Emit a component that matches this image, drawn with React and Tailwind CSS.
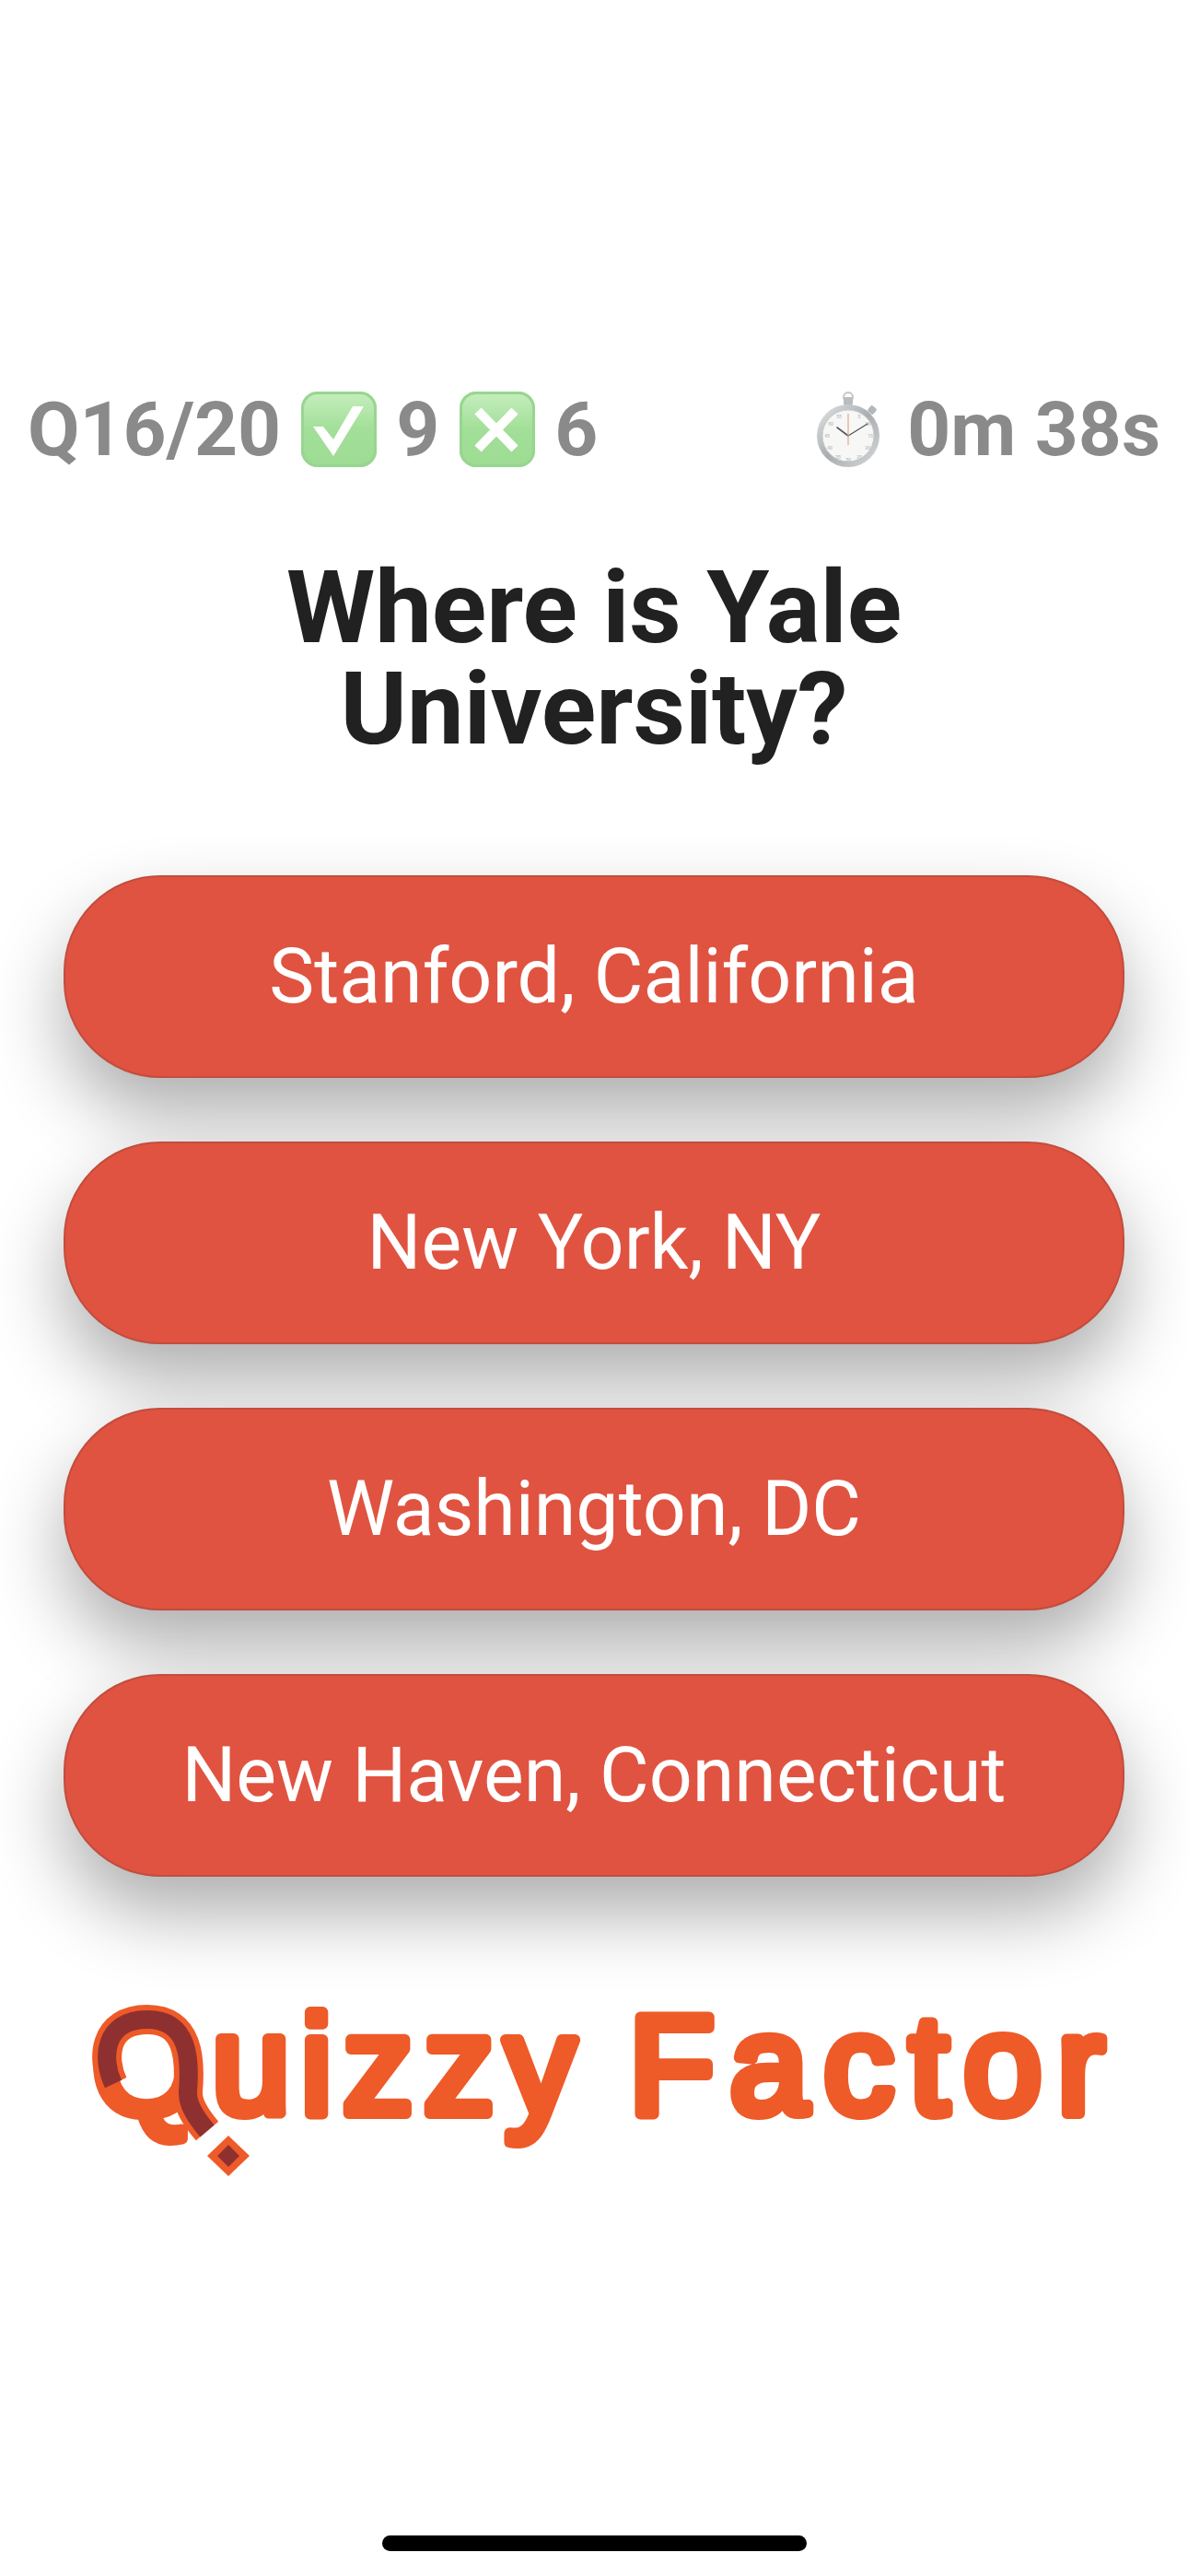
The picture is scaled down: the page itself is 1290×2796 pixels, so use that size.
const answers = [
  "Stanford, California",
  "New York, NY",
  "Washington, DC",
  "New Haven, Connecticut",
];

const EmojiBox = ({ children }) => (
  <span className="block h-[82px] w-[82px] rounded-[18px] bg-gradient-to-b from-[#c6eebe] via-[#a2df98] to-[#9edb93] shadow-[inset_0_0_0_3px_#97d690]">
    <svg viewBox="0 0 82 82" className="h-[82px] w-[82px]">{children}</svg>
  </span>
);

const Stopwatch = () => (
  <svg viewBox="0 0 68 82" className="h-[82px] w-[68px]">
    <defs>
      <linearGradient id="ring" x1="0" y1="0" x2="1" y2="1">
        <stop offset="0" stopColor="#e4e6e8" />
        <stop offset="0.5" stopColor="#a9adb1" />
        <stop offset="1" stopColor="#d9dbdd" />
      </linearGradient>
    </defs>
    <circle cx="34" cy="6" r="5" fill="none" stroke="#c3c6c9" strokeWidth="2" />
    <rect x="29" y="6" width="10" height="9" rx="2" fill="#b9bcc0" />
    <rect x="56" y="16" width="8" height="8" rx="2" fill="#b4b7ba" transform="rotate(40 60 20)" />
    <circle cx="34" cy="48" r="34" fill="url(#ring)" />
    <circle cx="34" cy="48" r="28" fill="#f7f7f6" stroke="#c9cbcd" strokeWidth="1" />
    <g fontFamily="Roboto, sans-serif" fontSize="5" fill="#c4c4c4" textAnchor="middle">
      <text x="24" y="29">55</text>
      <text x="46" y="29">5</text>
      <text x="15" y="37">50</text>
      <text x="55" y="37">10</text>
      <text x="11" y="50">45</text>
      <text x="58" y="50">15</text>
      <text x="14" y="63">40</text>
      <text x="55" y="63">20</text>
      <text x="23" y="73">35</text>
      <text x="46" y="73">25</text>
      <text x="34" y="76">30</text>
    </g>
    <path d="M34 48 L22 39" stroke="#55585c" strokeWidth="1.6" strokeLinecap="round" />
    <path d="M34 48 L55 35" stroke="#55585c" strokeWidth="1.4" strokeLinecap="round" />
    <path d="M34 24 L34 58" stroke="#e0a98c" strokeWidth="1.2" />
  </svg>
);

const qArc = "M123 97 C110 70 112 27 160 27 C205 27 207 70 204 105 C203 120 214 135 225 148";

const Logo = () => (
  <svg viewBox="0 -20 1290 220" className="h-[220px] w-[1290px]">
    <g
      fontFamily="'Liberation Sans', Arial, sans-serif"
      fontWeight="400"
      fontSize="152"
      fill="#ee5a28"
      stroke="#ee5a28"
      strokeWidth="12"
      strokeLinejoin="round"
      strokeLinecap="round"
    >
      <text x="100" y="129" letterSpacing="12">Quizzy</text>
      <text x="683" y="129" letterSpacing="17">Factor</text>
    </g>
    <path d={qArc} fill="none" stroke="#ee5a28" strokeWidth="32" />
    <path d={qArc} fill="none" stroke="#8e3030" strokeWidth="20" />
    <path d="M248 153 L271 175 L248 197 L225 175 Z" fill="#ee5a28" />
    <path d="M248 163 L260 175 L248 187 L236 175 Z" fill="#8e3030" />
  </svg>
);

export default function App() {
  return (
    <div className="flex h-[2796px] w-[1290px] flex-col overflow-hidden bg-white font-['Roboto',sans-serif]">
      <div className="mt-[425px] flex h-[82px] items-center justify-between pl-[30px] pr-[30px] text-[82px] font-bold leading-none text-[#8a8a8a]">
        <div className="flex items-center gap-[21.5px]">
          <span>Q16/20</span>
          <EmojiBox>
            <path d="M13 38 L24 38 L35 52 L56 16 L68 16 L35 70 Z" fill="#fff" />
          </EmojiBox>
          <span>9</span>
          <EmojiBox>
            <path d="M20 21 L60 62 M60 21 L20 62" stroke="#fff" strokeWidth="10" />
          </EmojiBox>
          <span>6</span>
        </div>
        <div className="flex items-center gap-[30px]">
          <Stopwatch />
          <span>0m 38s</span>
        </div>
      </div>

      <h1 className="mx-auto mt-[98px] w-[800px] text-center text-[110px] font-bold leading-[110px] text-[#212121]">
        Where is Yale University?
      </h1>

      <div className="mt-[124.5px] flex flex-col gap-[69px]">
        {answers.map((answer) => (
          <button
            key={answer}
            className="mx-auto flex h-[220px] w-[1152px] items-center justify-center rounded-[105px] border-2 border-[#c24d3d] bg-[#e05340] text-[82.5px] text-white shadow-[0_40px_80px_rgba(0,0,0,0.32)]"
          >
            {answer}
          </button>
        ))}
      </div>

      <div className="mt-[108.5px]">
        <Logo />
      </div>

      <div className="mx-auto mt-[387px] h-[17px] w-[461px] rounded-full bg-black" />
    </div>
  );
}
